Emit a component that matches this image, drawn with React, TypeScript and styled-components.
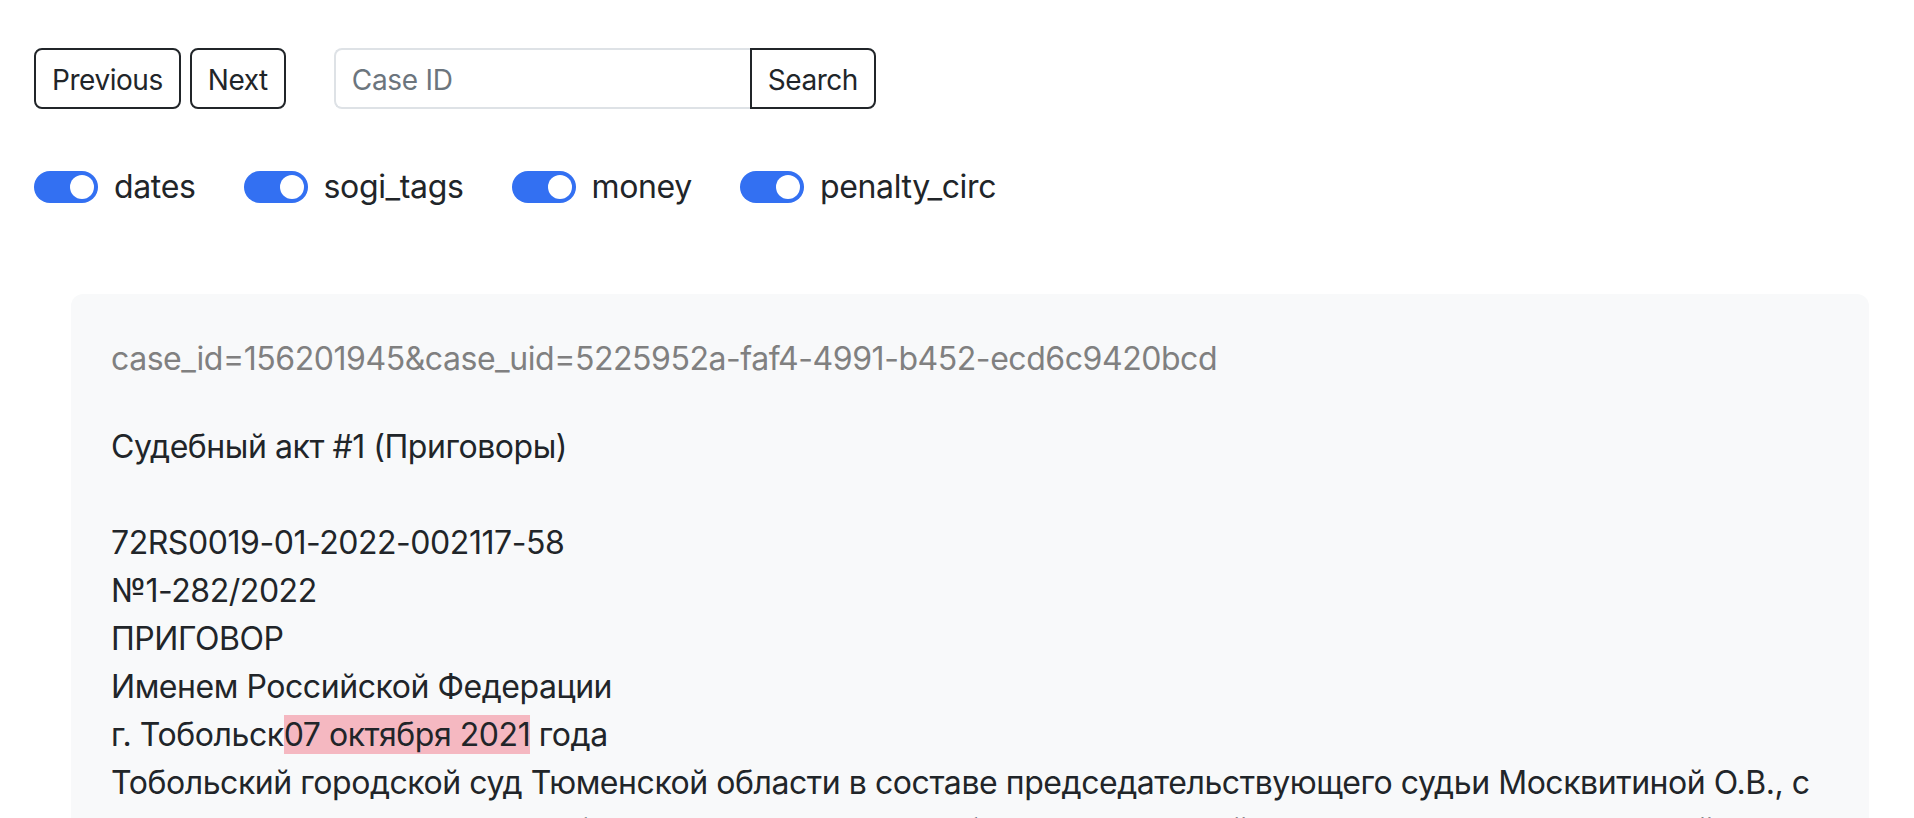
import React from "react";
import styled, { createGlobalStyle } from "styled-components";

const GlobalStyle = createGlobalStyle`
  html, body {
    margin: 0;
    padding: 0;
    background: #ffffff;
  }
  body {
    font-family: Inter, "Noto Sans", "DejaVu Sans", sans-serif;
    color: #212529;
  }
  * { box-sizing: border-box; }
`;

const Page = styled.div`
  padding: 48px 45px 0 34px;
`;

const Toolbar = styled.div`
  display: flex;
  align-items: stretch;
  height: 61px;
`;

const Button = styled.button<{ $joined?: boolean }>`
  font-family: inherit;
  font-size: 28px;
  letter-spacing: -0.45px;
  line-height: 41px;
  padding: 10px 16px 6px;
  color: #212529;
  background: transparent;
  border: 2px solid #212529;
  border-radius: ${(p) => (p.$joined ? "0 8px 8px 0" : "8px")};
  cursor: pointer;
  margin-right: 9px;
`;

const InputGroup = styled.div`
  display: flex;
  margin-left: 39px;
`;

const CaseInput = styled.input`
  width: 416px;
  font-family: inherit;
  font-size: 28px;
  letter-spacing: -0.3px;
  padding: 3px 16px 0;
  color: #212529;
  border: 2px solid #dee2e6;
  border-right: none;
  border-radius: 8px 0 0 8px;
  outline: none;
  background: #fff;
  &::placeholder {
    color: #6c757d;
  }
`;

const ToggleRow = styled.div`
  display: flex;
  align-items: center;
  margin-top: 54px;
  height: 48px;
`;

const ToggleItem = styled.label`
  display: flex;
  align-items: center;
  margin-right: 48px;
  font-size: 32px;
  letter-spacing: -0.35px;
  line-height: 48px;
`;

const Switch = styled.span<{ $on: boolean }>`
  position: relative;
  width: 64px;
  height: 32px;
  border-radius: 16px;
  background: ${(p) => (p.$on ? "#3370f2" : "#ffffff")};
  border: ${(p) => (p.$on ? "none" : "2px solid #bfc4c9")};
  margin-right: 16px;
  flex-shrink: 0;
  &::after {
    content: "";
    position: absolute;
    top: 4px;
    left: ${(p) => (p.$on ? "36px" : "4px")};
    width: 24px;
    height: 24px;
    border-radius: 50%;
    background: ${(p) => (p.$on ? "#ffffff" : "#bfc4c9")};
  }
`;

const Panel = styled.div`
  margin: 83px 0 0 37px;
  padding: 41px 40px;
  background: #f8f9fa;
  border-radius: 12px;
  font-size: 32px;
  letter-spacing: -0.45px;
  line-height: 48px;
`;

const CaseId = styled.div`
  color: #808080;
  margin-bottom: 40px;
`;

const DocText = styled.div`
  white-space: pre-wrap;
`;

const Mark = styled.span`
  background: #f5b8c1;
`;

const toggles = ["dates", "sogi_tags", "money", "penalty_circ"];

export default function App() {
  return (
    <>
      <GlobalStyle />
      <Page>
        <Toolbar>
          <Button>Previous</Button>
          <Button>Next</Button>
          <InputGroup>
            <CaseInput placeholder="Case ID" />
            <Button $joined>Search</Button>
          </InputGroup>
        </Toolbar>
        <ToggleRow>
          {toggles.map((t) => (
            <ToggleItem key={t}>
              <Switch $on={true} />
              {t}
            </ToggleItem>
          ))}
        </ToggleRow>
        <Panel>
          <CaseId>case_id=156201945&amp;case_uid=5225952a-faf4-4991-b452-ecd6c9420bcd</CaseId>
          <DocText>
            {"Судебный акт #1 (Приговоры)\n\n72RS0019-01-2022-002117-58\n№1-282/2022\nПРИГОВОР\nИменем Российской Федерации\nг. Тобольск"}
            <Mark>07 октября 2021</Mark>
            {" года\nТобольский городской суд Тюменской области в составе председательствующего судьи Москвитиной О.В., с участием государственного обвинителя помощника Тобольского межрайонного прокурора Тюменской области, подсудимого, защитника – адвоката, при секретаре судебного заседания"}
          </DocText>
        </Panel>
      </Page>
    </>
  );
}
